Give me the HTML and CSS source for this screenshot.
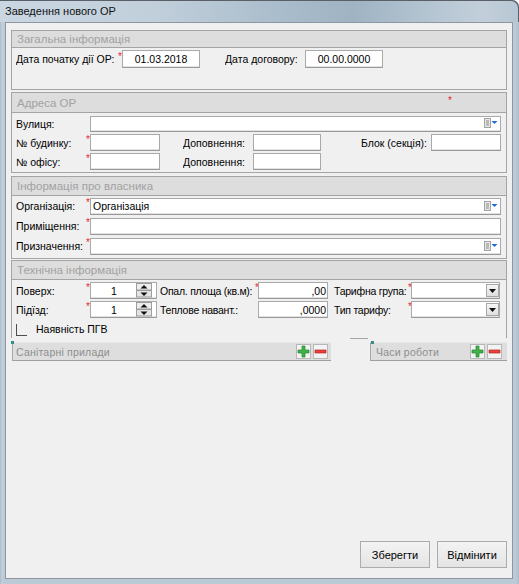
FILE: index.html
```html
<!DOCTYPE html>
<html lang="uk">
<head>
<meta charset="utf-8">
<title>Заведення нового ОР</title>
<link rel="stylesheet" href="styles.css">
</head>
<body>
<div class="window">
  <div class="titlebar"><span class="title">Заведення нового ОР</span></div>
  <div class="client">

    <section class="group g1">
      <div class="ghead h17"><span>Загальна інформація</span></div>
      <div class="gbody b1">
        <div class="row r18">
          <span class="lbl w102">Дата початку дії ОР:</span><span class="req">*</span>
          <span class="field w78 center">01.03.2018</span>
          <span class="lbl w80 ml25">Дата договору:</span>
          <span class="field w78 center">00.00.0000</span>
        </div>
      </div>
    </section>

    <section class="group g2">
      <div class="ghead h20"><span>Адреса ОР</span><span class="head-req">*</span></div>
      <div class="gbody b2">
        <div class="row">
          <span class="lbl w70">Вулиця:</span><span class="req"></span>
          <span class="field w411 h16"><span class="val"></span>
            <svg class="listicon" width="14" height="10" viewBox="0 0 14 10"><rect x="0.5" y="0.5" width="6" height="9" fill="#e6e6e6" stroke="#a3a3a3"/><path d="M2 3h3M2 5h3M2 7h3" stroke="#8c8c8c"/><path d="M7.5 3h6l-3 3z" fill="#1f6fd6"/></svg>
          </span>
        </div>
        <div class="row">
          <span class="lbl w70">№ будинку:</span><span class="req">*</span>
          <span class="field w70"></span>
          <span class="lbl w70 ml23">Доповнення:</span>
          <span class="field w68"></span>
          <span class="lbl w110 align-r">Блок (секція):</span>
          <span class="field w70"></span>
        </div>
        <div class="row">
          <span class="lbl w70">№ офісу:</span><span class="req">*</span>
          <span class="field w70"></span>
          <span class="lbl w70 ml23">Доповнення:</span>
          <span class="field w68"></span>
        </div>
      </div>
    </section>

    <section class="group g3">
      <div class="ghead h19"><span>Інформація про власника</span></div>
      <div class="gbody b3">
        <div class="row r20">
          <span class="lbl w70">Організація:</span><span class="req">*</span>
          <span class="field w411"><span class="val">Організація</span>
            <svg class="listicon" width="14" height="10" viewBox="0 0 14 10"><rect x="0.5" y="0.5" width="6" height="9" fill="#e6e6e6" stroke="#a3a3a3"/><path d="M2 3h3M2 5h3M2 7h3" stroke="#8c8c8c"/><path d="M7.5 3h6l-3 3z" fill="#1f6fd6"/></svg>
          </span>
        </div>
        <div class="row r20">
          <span class="lbl w70">Приміщення:</span><span class="req">*</span>
          <span class="field w411"></span>
        </div>
        <div class="row r20">
          <span class="lbl w70">Призначення:</span><span class="req">*</span>
          <span class="field w411"><span class="val"></span>
            <svg class="listicon" width="14" height="10" viewBox="0 0 14 10"><rect x="0.5" y="0.5" width="6" height="9" fill="#e6e6e6" stroke="#a3a3a3"/><path d="M2 3h3M2 5h3M2 7h3" stroke="#8c8c8c"/><path d="M7.5 3h6l-3 3z" fill="#1f6fd6"/></svg>
          </span>
        </div>
      </div>
    </section>

    <section class="group g4">
      <div class="ghead h19"><span>Технічна інформація</span></div>
      <div class="gbody b4">
        <div class="row">
          <span class="lbl w70">Поверх:</span><span class="req">*</span>
          <span class="field spin w67"><span class="val center">1</span>
            <svg class="spinbtns" width="16" height="15" viewBox="0 0 16 15"><rect x="0.5" y="0.5" width="15" height="6.5" fill="#ededed" stroke="#9e9e9e"/><rect x="0.5" y="7.5" width="15" height="6.5" fill="#e4e4e4" stroke="#9e9e9e"/><path d="M4.5 5.5h7l-3.5-3.5z" fill="#111"/><path d="M4.5 9.5h7l-3.5 3.5z" fill="#111"/></svg>
          </span>
          <span class="lbl w98 pl3 tight">Опал. площа (кв.м):</span><span class="req w3">*</span>
          <span class="field w70 num">,00</span>
          <span class="lbl w80 pl6 tight">Тарифна група:</span><span class="req w3">*</span>
          <span class="field combo w89"><span class="val"></span>
            <span class="dd"><svg width="7" height="4" viewBox="0 0 7 4"><path d="M0 0h7L3.5 4z" fill="#111"/></svg></span>
          </span>
        </div>
        <div class="row">
          <span class="lbl w70">Підїзд:</span><span class="req">*</span>
          <span class="field spin w67"><span class="val center">1</span>
            <svg class="spinbtns" width="16" height="15" viewBox="0 0 16 15"><rect x="0.5" y="0.5" width="15" height="6.5" fill="#ededed" stroke="#9e9e9e"/><rect x="0.5" y="7.5" width="15" height="6.5" fill="#e4e4e4" stroke="#9e9e9e"/><path d="M4.5 5.5h7l-3.5-3.5z" fill="#111"/><path d="M4.5 9.5h7l-3.5 3.5z" fill="#111"/></svg>
          </span>
          <span class="lbl w98 pl3 tight">Теплове навант.:</span><span class="req w3"></span>
          <span class="field w70 num">,0000</span>
          <span class="lbl w80 pl6 tight">Тип тарифу:</span><span class="req w3">*</span>
          <span class="field combo w89"><span class="val"></span>
            <span class="dd"><svg width="7" height="4" viewBox="0 0 7 4"><path d="M0 0h7L3.5 4z" fill="#111"/></svg></span>
          </span>
        </div>
        <div class="row">
          <span class="check"></span><span class="check-label">Наявність ПГВ</span>
        </div>
      </div>
    </section>

    <div class="panels">
      <div class="panel pleft">
        <span class="marker"></span>
        <div class="pband">
          <span class="ptitle">Санітарні прилади</span>
          <span class="pbtn"><svg width="13" height="13" viewBox="0 0 13 13"><path d="M5 1h3v4h4v3H8v4H5V8H1V5h4z" fill="#3fb24b" stroke="#23862f" stroke-width="0.7"/></svg></span>
          <span class="pbtn"><svg width="13" height="13" viewBox="0 0 13 13"><path d="M1 5h11v3H1z" fill="#e8433c" stroke="#b4241e" stroke-width="0.7"/></svg></span>
        </div>
      </div>
      <div class="panel pright">
        <span class="marker"></span>
        <div class="pband">
          <span class="ptitle">Часи роботи</span>
          <span class="pbtn"><svg width="13" height="13" viewBox="0 0 13 13"><path d="M5 1h3v4h4v3H8v4H5V8H1V5h4z" fill="#3fb24b" stroke="#23862f" stroke-width="0.7"/></svg></span>
          <span class="pbtn"><svg width="13" height="13" viewBox="0 0 13 13"><path d="M1 5h11v3H1z" fill="#e8433c" stroke="#b4241e" stroke-width="0.7"/></svg></span>
        </div>
      </div>
    </div>

    <div class="actions">
      <button class="btn" type="button">Зберегти</button>
      <button class="btn" type="button">Відмінити</button>
    </div>
  </div>
</div>
</body>
</html>
```
FILE: styles.css
```css
* { box-sizing: border-box; }
html, body { margin: 0; padding: 0; }
body {
  width: 519px;
  height: 584px;
  overflow: hidden;
  background: #ffffff;
  font-family: "Liberation Sans", Arial, sans-serif;
  font-size: 10.5px;
  color: #000;
}

.window {
  width: 519px;
  height: 584px;
  display: flex;
  flex-direction: column;
  background: linear-gradient(to right, #a9bac8 0, #c3d0db 2px, #bccad6 4px, #bccad6 515px, #aebfcc 519px);
  border-top-right-radius: 7px;
}

.titlebar {
  flex: none;
  height: 22px;
  display: flex;
  align-items: center;
  padding-left: 5px;
  background: linear-gradient(to right, #cad7e2 0%, #c1cfdb 30%, #a9bccb 55%, #9fb3c3 68%, #b3c4d1 82%, #c2cfda 93%, #b7c6d3 100%);
  border-top-right-radius: 7px;
  box-shadow: inset -1px 1px 0 #5a6068;
}
.title { font-size: 11px; color: #111; }

.client {
  flex: 1;
  margin: 0 6px 5px 5px;
  border: 1px solid #8e979f;
  background: #f0f0f0;
  display: flex;
  flex-direction: column;
  padding: 7px 5px 10px 5px;
}

/* group boxes */
.group {
  flex: none;
  border: 1px solid #a4a4a4;
  background: #f0f0f0;
}
.g2 { margin-top: 2px; }
.g3 { margin-top: 3px; }
.g4 { margin-top: 1px; }

.ghead {
  display: flex;
  align-items: center;
  padding-left: 5px;
  background: #dddddd;
  border-bottom: 1px solid #a4a4a4;
  color: #a2a2a2;
  font-size: 11.5px;
}
.h17 { height: 17px; }
.h19 { height: 19px; }
.h20 { height: 20px; }
.head-req {
  margin-left: auto;
  margin-right: 54px;
  color: #e8262a;
  font-size: 10px;
  line-height: 10px;
  align-self: flex-start;
  margin-top: 3px;
}

.gbody { padding-left: 4px; }
.b1 { height: 41px; padding-top: 2px; }
.b2 { height: 59px; padding-top: 1px; }
.b3 { height: 62px; }
.b4 { height: 58px; padding-top: 1px; }

.row {
  display: flex;
  align-items: center;
  height: 19px;
}
.r18 { height: 18px; }
.r20 { height: 20px; }

.lbl { flex: none; white-space: nowrap; overflow: hidden; }
.tight { letter-spacing: -0.25px; }
.align-r { text-align: right; padding-right: 4px; }
.pl3 { padding-left: 3px; }
.pl6 { padding-left: 6px; }
.ml23 { margin-left: 23px; }
.ml25 { margin-left: 25px; }

.req {
  flex: none;
  width: 4px;
  align-self: flex-start;
  height: 100%;
  color: #e8262a;
  font-size: 10px;
  line-height: 10px;
  padding-top: 2px;
  overflow: visible;
  white-space: nowrap;
}
.req.w3 { width: 3px; }

.w67 { width: 67px; }
.w68 { width: 68px; }
.w70 { width: 70px; }
.w78 { width: 78px; }
.w80 { width: 80px; }
.w89 { width: 89px; }
.w98 { width: 98px; }
.w102 { width: 102px; }
.w110 { width: 110px; }
.w411 { width: 411px; }

.field {
  flex: none;
  height: 17px;
  display: flex;
  align-items: center;
  background: #ffffff;
  border: 1px solid #a9a9a9;
  border-bottom-color: #999999;
  box-shadow: inset 0 -1px 0 #e2e2e2;
  padding: 0 2px;
  white-space: nowrap;
  overflow: hidden;
}
.r18 .field { height: 18px; }
.field.h16 { height: 16px; }
.field.center { justify-content: center; }
.field.num { justify-content: flex-end; padding-right: 1px; }
.val { flex: 1; }
.val.center { text-align: center; }

.listicon { flex: none; margin-top: -1px; }

.spin { padding: 0 4px 0 1px; }
.spinbtns { flex: none; }

.combo { padding-right: 0; }
.dd {
  flex: none;
  width: 13px;
  height: 13px;
  display: flex;
  align-items: center;
  justify-content: center;
  background: linear-gradient(#f7f7f7, #dedede);
  border: 1px solid #a7a7a7;
}

.check {
  flex: none;
  width: 11px;
  height: 12px;
  border-left: 1px solid #4d4d4d;
  border-bottom: 1px solid #4d4d4d;
  margin-top: 3px;
}
.check-label { margin-left: 9px; }

/* sub-panels */
.panels {
  flex: none;
  display: flex;
  margin-top: -1px;
}
.panel {
  position: relative;
  background: #f0f0f0;
  padding-top: 4px;
}
.pleft { width: 339px; }
.pleft .pband { width: 319px; margin-left: 1px; padding-left: 3px; padding-right: 3px; }
.pright { flex: 1; margin-left: 18px; padding-left: 2px; }
.pright .pband { padding-left: 5px; padding-right: 5px; }

.marker {
  position: absolute;
  left: 0;
  top: 3px;
  width: 3px;
  height: 3px;
  background: #3a8b8b;
}
.pright .marker { left: 3px; }

.pband {
  height: 19px;
  display: flex;
  align-items: center;
  gap: 2px;
  background: #dedede;
  border-left: 1px solid #a8a8a8;
  border-top: 1px solid #e8e8e8;
  border-bottom: 1px solid #9f9f9f;
}
.ptitle {
  flex: 1;
  color: #8e8e8e;
  font-size: 10.5px;
  letter-spacing: 0.2px;
  white-space: nowrap;
}
.pbtn {
  flex: none;
  width: 15px;
  height: 15px;
  display: flex;
  align-items: center;
  justify-content: center;
  background: #f3f3f3;
  border: 1px solid #b7b7b7;
}

/* action buttons */
.actions {
  margin-top: auto;
  display: flex;
  justify-content: flex-end;
  gap: 7px;
}
.btn {
  width: 70px;
  height: 27px;
  margin: 0;
  padding: 0;
  border: 1px solid #acacac;
  border-radius: 0;
  background: linear-gradient(#f3f3f3, #e4e4e4);
  font-family: "Liberation Sans", Arial, sans-serif;
  font-size: 11px;
  color: #000;
}
```
